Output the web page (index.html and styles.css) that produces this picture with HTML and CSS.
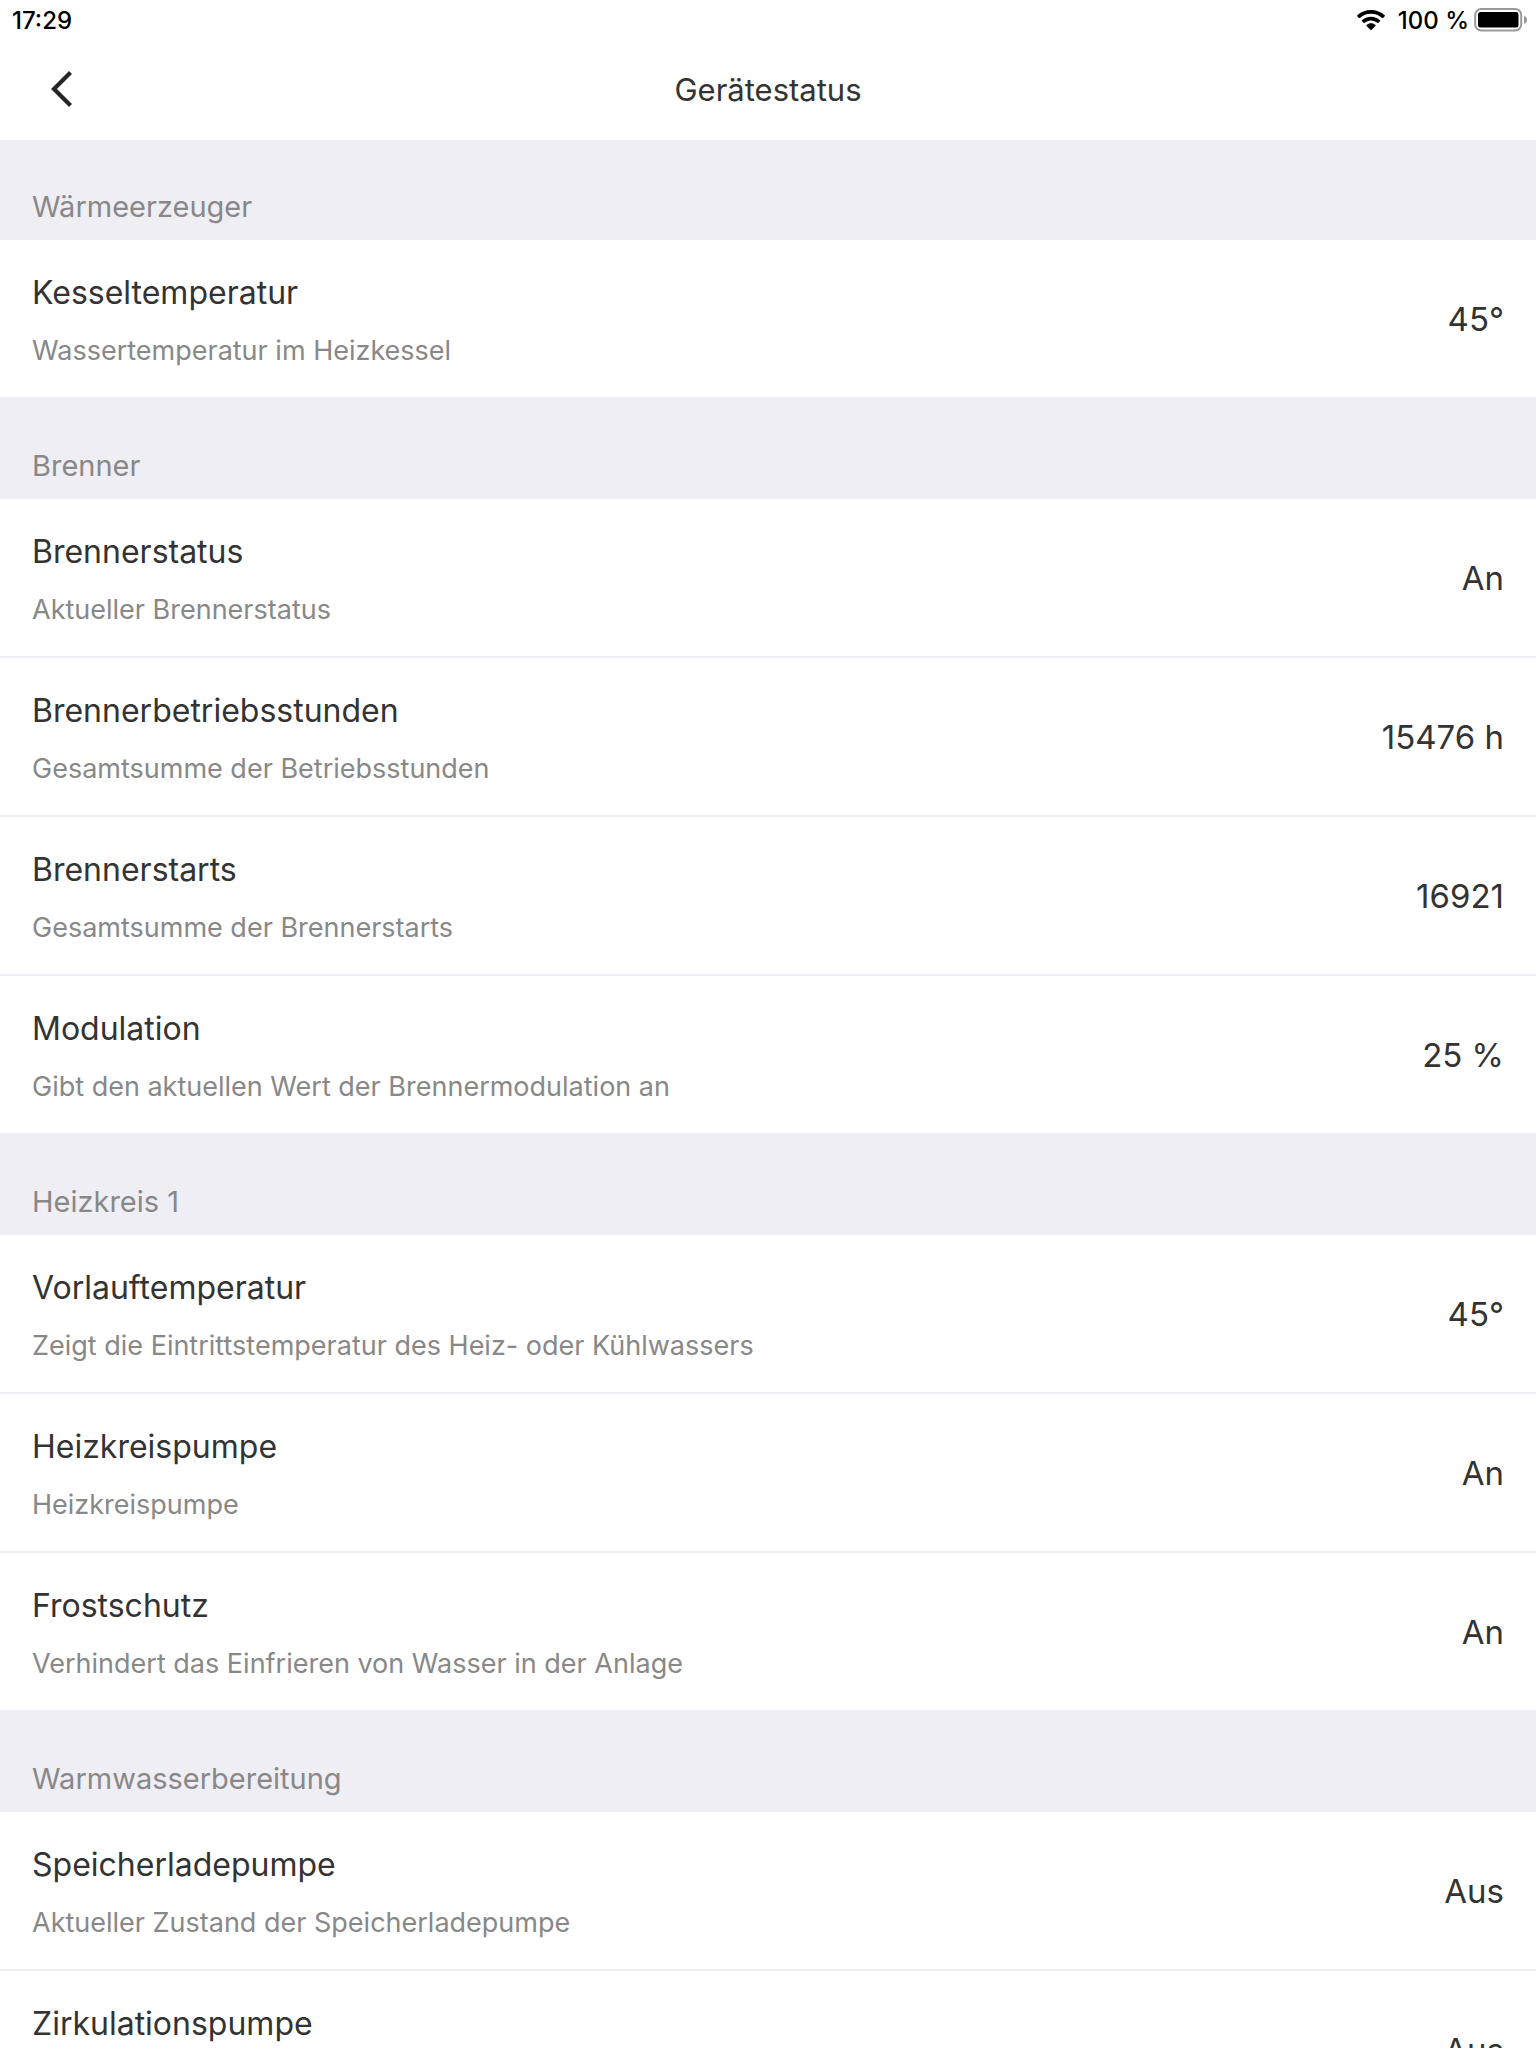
FILE: index.html
```html
<!DOCTYPE html>
<html lang="de">
<head>
<meta charset="utf-8">
<meta name="viewport" content="width=device-width, initial-scale=1">
<title>Gerätestatus</title>
<link rel="stylesheet" href="styles.css">
</head>
<body>
<div class="app">
  <div class="statusbar">
    <time>17:29</time>
    <div class="indicators">
      <svg class="wifi" width="28" height="20" viewBox="0 0 28 20" aria-hidden="true">
        <path d="M14 0C8.700 0 3.800 2 .3 5.300q-.5.500 0 1l1.600 1.600q.5.400 1 0C5.900 5.200 9.700 3.700 14 3.700s8.100 1.500 11.100 4.200q.5.400 1 0l1.600-1.600q.5-.5 0-1C24.200 2 19.300 0 14 0Z"/>
        <path d="M14 6.800c-3.400 0-6.600 1.300-9 3.400q-.5.500 0 1l1.600 1.500q.5.500 1 .1c1.700-1.500 3.900-2.400 6.400-2.400s4.700.9 6.400 2.400q.5.400 1-.1l1.600-1.500q.5-.5 0-1c-2.400-2.100-5.600-3.400-9-3.400Z"/>
        <path d="M14 13.300c-1.700 0-3.200.6-4.400 1.600q-.5.500 0 1l3.800 3.800q.6.500 1.200 0l3.800-3.800q.5-.5 0-1c-1.200-1-2.700-1.600-4.400-1.600Z"/>
      </svg>
      <span class="charge">100 %</span>
      <svg class="battery" width="54" height="24" viewBox="0 0 54 24" aria-hidden="true">
        <rect x="1.200" y="1" width="46" height="21.500" rx="6" fill="none" stroke="#999" stroke-width="2"/>
        <rect x="4" y="4" width="40.500" height="15.500" rx="2.500"/>
        <path d="M50 8c2 .5 3 2 3 3.900s-1 3.400-3 3.900Z" fill="#999"/>
      </svg>
    </div>
  </div>
  <header class="navbar">
    <button class="back" type="button" aria-label="Zurück">
      <svg width="22" height="36" viewBox="0 0 22 36" aria-hidden="true"><path d="M19.500 1.500 3 18l16.500 16.500" fill="none" stroke="#262626" stroke-width="4.200"/></svg>
    </button>
    <h1>Gerätestatus</h1>
  </header>
  <main class="content">
    <section>
      <h2>Wärmeerzeuger</h2>
      <ul>
        <li><div><h3>Kesseltemperatur</h3><p>Wassertemperatur im Heizkessel</p></div><span class="value">45°</span></li>
      </ul>
    </section>
    <section>
      <h2>Brenner</h2>
      <ul>
        <li><div><h3>Brennerstatus</h3><p>Aktueller Brennerstatus</p></div><span class="value">An</span></li>
        <li><div><h3>Brennerbetriebsstunden</h3><p>Gesamtsumme der Betriebsstunden</p></div><span class="value">15476 h</span></li>
        <li><div><h3>Brennerstarts</h3><p>Gesamtsumme der Brennerstarts</p></div><span class="value">16921</span></li>
        <li><div><h3>Modulation</h3><p>Gibt den aktuellen Wert der Brennermodulation an</p></div><span class="value">25 %</span></li>
      </ul>
    </section>
    <section>
      <h2>Heizkreis 1</h2>
      <ul>
        <li><div><h3>Vorlauftemperatur</h3><p>Zeigt die Eintrittstemperatur des Heiz- oder Kühlwassers</p></div><span class="value">45°</span></li>
        <li><div><h3>Heizkreispumpe</h3><p>Heizkreispumpe</p></div><span class="value">An</span></li>
        <li><div><h3>Frostschutz</h3><p>Verhindert das Einfrieren von Wasser in der Anlage</p></div><span class="value">An</span></li>
      </ul>
    </section>
    <section>
      <h2>Warmwasserbereitung</h2>
      <ul>
        <li><div><h3>Speicherladepumpe</h3><p>Aktueller Zustand der Speicherladepumpe</p></div><span class="value">Aus</span></li>
        <li><div><h3>Zirkulationspumpe</h3><p>Aktueller Zustand der Zirkulationspumpe</p></div><span class="value">Aus</span></li>
      </ul>
    </section>
  </main>
</div>
</body>
</html>
```
FILE: styles.css
```css
* {
  box-sizing: border-box;
}

body,
h1,
h2,
h3,
p,
ul {
  margin: 0;
  padding: 0;
  font-weight: 400;
}

body {
  background: #fff;
  color: #333;
  font-family: Inter, "Liberation Sans", sans-serif;
}

.app {
  display: flex;
  flex-direction: column;
  height: 100vh;
}

.statusbar {
  display: flex;
  flex: none;
  justify-content: space-between;
  align-items: center;
  height: 40px;
  padding: 0 8px 0 12px;
  color: #000;
  font-size: 24px;
  font-weight: 500;
  line-height: 30px;
}

time,
.charge {
  padding-top: 2px;
}

.indicators {
  display: flex;
  align-items: center;
}

.wifi {
  margin-right: 13px;
}

.battery {
  margin-left: 5px;
}

.navbar {
  display: grid;
  flex: none;
  grid-template-columns: 1fr auto 1fr;
  align-items: center;
  height: 100px;
  padding: 0 32px;
}

.back {
  display: flex;
  align-items: center;
  justify-self: start;
  padding: 6px 19px 8px;
  border: 0;
  background: none;
}

h1 {
  font-size: 31px;
  line-height: 40px;
}

.content {
  flex: 1;
  min-height: 0;
  overflow-y: auto;
  scrollbar-width: none;
}

h2 {
  padding: 51px 32px 15px;
  background: #efeef4;
  color: #888;
  font-size: 29px;
  line-height: 36px;
}

section:first-child h2 {
  padding-top: 49px;
}

ul {
  list-style: none;
}

li {
  display: flex;
  justify-content: space-between;
  align-items: center;
  padding: 33px 32px 28px;
}

li + li {
  border-top: 2px solid #efeef4;
}

h3 {
  font-size: 32px;
  line-height: 40px;
}

.value {
  margin-bottom: 4px;
  font-size: 33px;
  line-height: 40px;
}

p {
  margin-top: 20px;
  color: #888;
  font-size: 27px;
  line-height: 36px;
}
```
